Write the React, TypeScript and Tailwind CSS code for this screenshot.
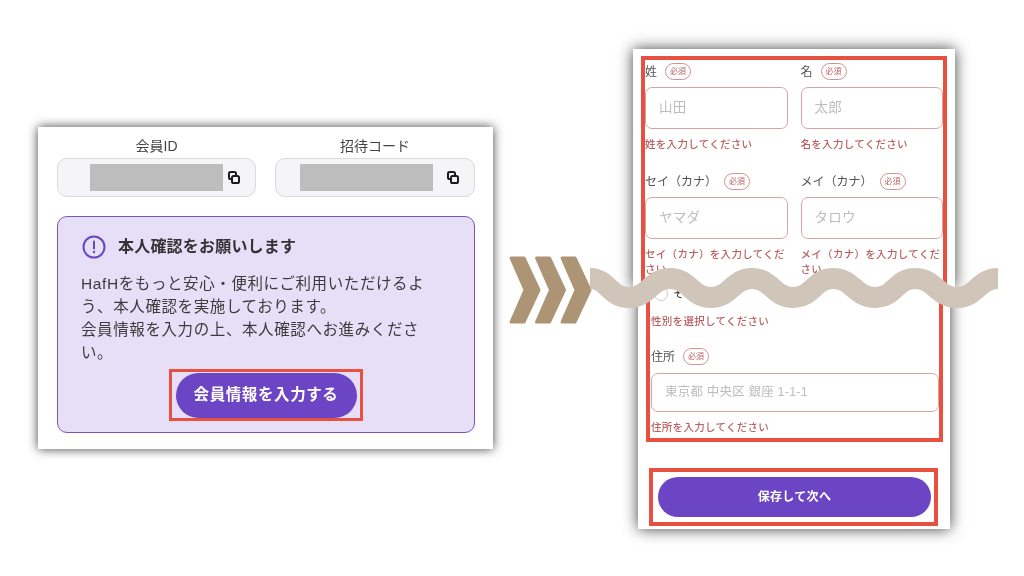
import React from "react";

const Copy = () => (
  <svg width="12" height="13" viewBox="0 0 12 13" fill="none" stroke="#1c1c1c" strokeWidth="2">
    <rect x="1" y="1" width="7" height="7" rx="1.6" />
    <rect x="4" y="5" width="7" height="7" rx="1.6" fill="#f5f5f8" />
  </svg>
);

const IdBox = ({ label, inset }: { label: string; inset: string }) => (
  <div className="flex flex-col items-center">
    <p className="h-[22px] text-[14px] leading-[20px] text-[#444]">{label}</p>
    <div className={`w-full h-[39px] rounded-[10px] border border-[#d9d9de] bg-[#f5f5f8] flex items-center ${inset} pr-[15px] justify-between`}>
      <div className="w-[133px] h-[27px] bg-[#bdbdbd]"></div>
      <Copy />
    </div>
  </div>
);

const Required = () => (
  <span className="w-[26px] h-[17px] rounded-full border-[1.5px] border-[#d49090] flex items-center justify-center text-[8px] leading-none text-[#bb5f62] shrink-0">
    必須
  </span>
);

const Field = ({
  label,
  placeholder,
  error,
  gap = "gap-[8px]",
  inputClass = "mt-[7px] h-[42px] text-[13.5px]",
  errorClass = "h-[44px]",
}: {
  label: string;
  placeholder: string;
  error: string;
  gap?: string;
  inputClass?: string;
  errorClass?: string;
}) => (
  <div className="flex flex-col">
    <div className={`flex items-center h-[17px] ${gap}`}>
      <span className="text-[12px] leading-none text-[#555] whitespace-nowrap">{label}</span>
      <Required />
    </div>
    <div className={`${inputClass} rounded-[7px] border-[1.5px] border-[#dba4a4] bg-white flex items-center pl-[13px] text-[#bdbdbd] tracking-[0.2px]`}>
      {placeholder}
    </div>
    <p className={`mt-[8px] text-[10.5px] font-medium leading-[15px] tracking-[0.3px] text-[#bb5f62] ${errorClass}`}>{error}</p>
  </div>
);

export default function App() {
  return (
    <div className="relative w-[1024px] h-[576px] overflow-hidden bg-white [font-family:'Liberation_Sans','Noto_Sans_CJK_JP',sans-serif]">
      {/* left screenshot */}
      <section className="absolute left-[38px] top-[127px] w-[455px] h-[322px] bg-white shadow-[0_0_10px_rgba(0,0,0,0.75)] pl-[19px] pr-[18px] pt-[9px] blur-[0.4px]">
        <div className="grid grid-cols-[199px_200px] gap-[19px]">
          <IdBox label="会員ID" inset="pl-[32px]" />
          <IdBox label="招待コード" inset="pl-[24px]" />
        </div>
        <div className="mt-[19px] h-[217px] rounded-[10px] border border-[#7a55b8] bg-[#e6dff7] pl-[23px] pt-[18px]">
          <div className="flex items-center gap-[12px] h-[24px] ml-[1px]">
            <svg width="24" height="24" viewBox="0 0 24 24" fill="none" className="shrink-0">
              <circle cx="12" cy="12" r="10.5" stroke="#6b45c4" strokeWidth="2" />
              <path d="M12 6.500v7" stroke="#6b45c4" strokeWidth="2" strokeLinecap="round" />
              <circle cx="12" cy="17" r="1.200" fill="#6b45c4" />
            </svg>
            <h2 className="text-[16px] font-bold text-[#333] tracking-[0.2px] whitespace-nowrap">本人確認をお願いします</h2>
          </div>
          <p className="mt-[13px] text-[15.5px] leading-[23px] tracking-[0.6px] text-[#3c3c3c] whitespace-nowrap">
            HafHをもっと安心・便利にご利用いただけるよ
            <br />
            う、本人確認を実施しております。
            <br />
            会員情報を入力の上、本人確認へお進みくださ
            <br />
            い。
          </p>
          <div className="mt-[5px] ml-[88px] w-[194px] h-[52px] border-[3px] border-[#e8503f] flex items-center justify-center">
            <button className="w-[181px] h-[45px] rounded-full bg-[#6c45c4] text-white text-[15.5px] font-bold tracking-[0.6px] whitespace-nowrap">
              会員情報を入力する
            </button>
          </div>
        </div>
      </section>

      {/* right screenshot, upper half */}
      <section className="absolute left-[633px] top-[49px] w-[322px] h-[239px] bg-white shadow-[0_0_14px_rgba(0,0,0,0.75)] [clip-path:inset(-30px_-30px_0_-30px)] px-[8px] pt-[7px] blur-[0.4px]">
        <div className="h-[240px] border-x-4 border-t-4 border-[#e8503f] pt-[3px] grid grid-cols-2 gap-x-[13px] content-start">
          <Field label="姓" placeholder="山田" error="姓を入力してください" errorClass="h-[36px]" />
          <Field label="名" placeholder="太郎" error="名を入力してください" errorClass="h-[36px]" />
          <Field label="セイ（カナ）" placeholder="ヤマダ" error="セイ（カナ）を入力してください" gap="gap-[7px]" />
          <Field label="メイ（カナ）" placeholder="タロウ" error="メイ（カナ）を入力してください" gap="gap-[7px]" />
        </div>
      </section>

      {/* right screenshot, lower half */}
      <section className="absolute left-[638px] top-[288px] w-[312px] h-[241px] bg-white shadow-[0_0_14px_rgba(0,0,0,0.75)] [clip-path:inset(0_-30px_-30px_-30px)] blur-[0.4px]">
        <div className="ml-[8px] mr-[7px] h-[154px] border-x-4 border-b-4 border-[#e8503f] pl-[1px] flex flex-col">
          <div className="-mt-[2px] h-[16px] flex items-center gap-[5px] pl-[3px]">
            <span className="w-[14px] h-[14px] rounded-full border border-[#ccc] bg-white"></span>
            <span className="text-[11.5px] leading-none text-[#222]">その他</span>
          </div>
          <p className="mt-[12px] h-[15px] text-[10.5px] font-medium leading-[15px] tracking-[0.3px] text-[#bb5f62]">性別を選択してください</p>
          <div className="mt-[19px] w-[288px]">
            <Field
              label="住所"
              placeholder="東京都 中央区 銀座 1-1-1"
              error="住所を入力してください"
              inputClass="mt-[8px] h-[39px] text-[12.5px]"
              errorClass="h-[15px]"
            />
          </div>
        </div>
        <div className="mt-[26px] ml-[11px] w-[289px] h-[58px] border-4 border-[#e8503f] pl-[5px] pt-[5px]">
          <button className="w-[273px] h-[40px] rounded-full bg-[#6c45c4] text-white text-[12px] font-bold tracking-[0.3px]">
            保存して次へ
          </button>
        </div>
      </section>

      {/* chevrons and torn edge */}
      <svg className="absolute left-0 top-0" width="1024" height="576" viewBox="0 0 1024 576" fill="none">
        <g fill="#ad9474" stroke="#ad9474" strokeWidth="3" strokeLinejoin="round">
          <path d="M511 258H524L539 290L524 322H511L525 290Z" />
          <path d="M536.500 258H549.500L564.500 290L549.500 322H536.500L550.500 290Z" />
          <path d="M562 258H575L590 290L575 322H562L576 290Z" />
        </g>
        <path
          d="M590 278.500C608 278.500 609 297.500 629 297.500C649 297.500 650 278.500 670 278.500C690 278.500 691 297.500 711 297.500C731 297.500 732 278.500 752 278.500C772 278.500 773 297.500 793 297.500C813 297.500 814 278.500 833 278.500C853 278.500 855 297.500 875 297.500C895 297.500 896 278.500 915 278.500C935 278.500 937 297.500 957 297.500C977 297.500 978 278.500 998 278.500"
          stroke="#d0c5b9"
          strokeWidth="21"
        />
      </svg>
    </div>
  );
}
